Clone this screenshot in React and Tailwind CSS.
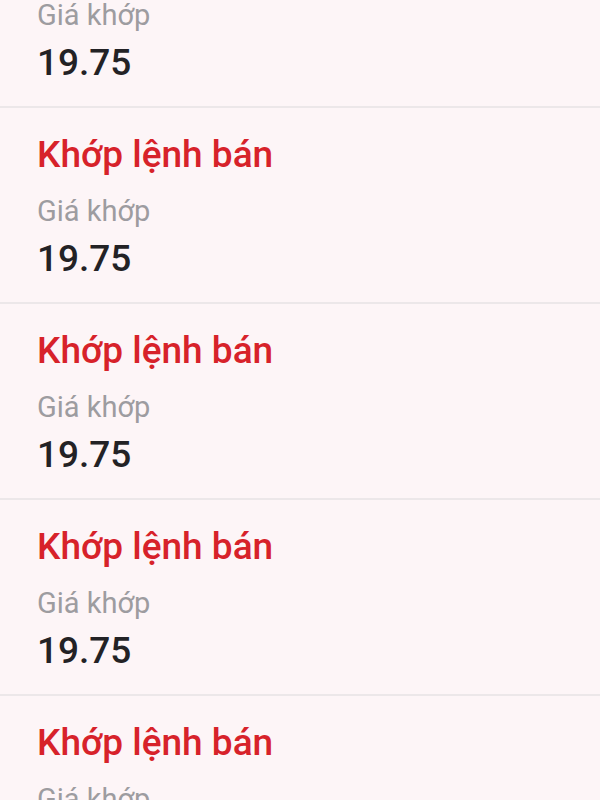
import React from 'react';

const ROWS = Array.from({ length: 6 }, (_, i) => ({
  id: i,
  title: 'Khớp lệnh bán',
  label: 'Giá khớp',
  price: '19.75',
}));

const MatchRow = ({ row }) => (
  <div className="px-[37px] pt-[27px] pb-[21px] border-b-2 border-[#ece7e9]">
    <p className="text-[37px] leading-[40px] font-medium text-[#d7222a]">{row.title}</p>
    <p className="mt-[20px] text-[29px] leading-[32px] text-[#9d9ca0]">{row.label}</p>
    <p className="mt-[10px] text-[37px] leading-[44px] font-medium text-[#232225]">{row.price}</p>
  </div>
);

export default function App() {
  return (
    <div className="w-[600px] h-[800px] overflow-hidden bg-[#fdf5f7]" style={{ fontFamily: 'Roboto, "Noto Sans", sans-serif' }}>
      <div className="-mt-[88px]">
        {ROWS.map((row) => (
          <MatchRow key={row.id} row={row} />
        ))}
      </div>
    </div>
  );
}
